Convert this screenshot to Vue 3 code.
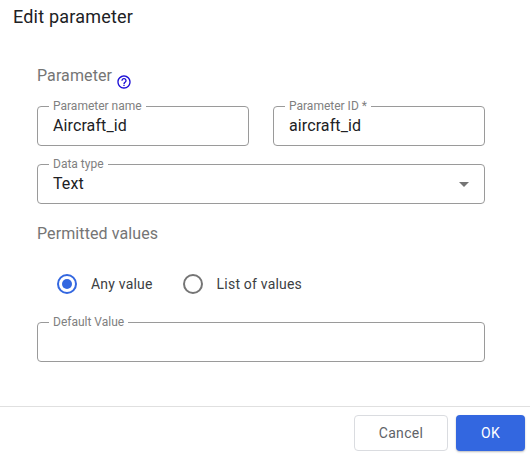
<template>
  <div class="dialog">
    <h1 class="title">Edit parameter</h1>

    <div class="body">
      <div class="section-head">
        <span class="section-title">Parameter</span>
        <svg class="help" viewBox="0 0 24 24" width="16" height="16">
          <path fill="#1a0dd6" d="M11 18h2v-2h-2v2zm1-16C6.48 2 2 6.48 2 12s4.48 10 10 10 10-4.48 10-10S17.52 2 12 2zm0 18c-4.41 0-8-3.59-8-8s3.59-8 8-8 8 3.59 8 8-3.59 8-8 8zm0-14c-2.21 0-4 1.79-4 4h2c0-1.1.9-2 2-2s2 .9 2 2c0 2-3 1.75-3 5h2c0-2.25 3-2.5 3-5 0-2.21-1.79-4-4-4z"/>
        </svg>
      </div>

      <div class="row">
        <div class="field">
          <label class="field-label">Parameter name</label>
          <div class="field-value">Aircraft_id</div>
        </div>
        <div class="field">
          <label class="field-label">Parameter ID *</label>
          <div class="field-value">aircraft_id</div>
        </div>
      </div>

      <div class="field select">
        <label class="field-label">Data type</label>
        <div class="field-value">Text</div>
        <span class="caret"></span>
      </div>

      <div class="section-title permitted">Permitted values</div>

      <div class="radios">
        <div v-for="opt in options" :key="opt" class="radio-item">
          <span class="radio" :class="{ checked: opt === selected }"></span>
          <span class="radio-label">{{ opt }}</span>
        </div>
      </div>

      <div class="field">
        <label class="field-label">Default Value</label>
        <div class="field-value"></div>
      </div>
    </div>

    <div class="footer">
      <button class="btn cancel">Cancel</button>
      <button class="btn ok">OK</button>
    </div>
  </div>
</template>

<script setup>
const options = ['Any value', 'List of values'];
const selected = 'Any value';
</script>

<style>
html, body {
  margin: 0;
  background: #fff;
}
</style>

<style scoped>
.dialog {
  width: 530px;
  height: 456px;
  display: flex;
  flex-direction: column;
  box-sizing: border-box;
  font-family: Roboto, "Liberation Sans", sans-serif;
  background: #fff;
}
.title {
  margin: 0;
  padding: 7px 13px 0;
  height: 29px;
  font-size: 18px;
  line-height: 20px;
  font-weight: 400;
  letter-spacing: 0.2px;
  color: #202124;
}
.body {
  flex: 1;
  padding: 30px 45px 0 37px;
}
.section-head {
  display: flex;
  align-items: flex-start;
  gap: 4px;
  height: 36px;
}
.section-title {
  font-size: 16px;
  line-height: 20px;
  letter-spacing: 0.1px;
  color: #757575;
}
.help {
  margin-top: 8px;
}
.row {
  display: grid;
  grid-template-columns: 212px 212px;
  gap: 24px;
  margin-top: 4px;
}
.field {
  position: relative;
  height: 40px;
  border: 1px solid #9a9a9a;
  border-radius: 4px;
  box-sizing: border-box;
}
.field-label {
  position: absolute;
  left: 11px;
  top: -8px;
  padding: 0 4px;
  font-size: 12px;
  line-height: 14px;
  color: #808080;
  background: #fff;
}
.field-value {
  padding: 9px 15px 0;
  font-size: 16px;
  line-height: 20px;
  letter-spacing: 0.1px;
  color: #202124;
}
.select {
  margin-top: 18px;
}
.caret {
  position: absolute;
  right: 15px;
  top: 17px;
  width: 0;
  height: 0;
  border-left: 5px solid transparent;
  border-right: 5px solid transparent;
  border-top: 5px solid #757575;
}
.permitted {
  display: block;
  margin-top: 20px;
}
.radios {
  display: flex;
  gap: 30px;
  margin-top: 30px;
  padding-left: 20px;
}
.radio-item {
  display: flex;
  align-items: center;
  gap: 14px;
}
.radio {
  width: 20px;
  height: 20px;
  border: 2px solid #757575;
  border-radius: 50%;
  box-sizing: border-box;
  display: flex;
  align-items: center;
  justify-content: center;
}
.radio.checked {
  border-color: #3367e0;
}
.radio.checked::after {
  content: "";
  width: 10px;
  height: 10px;
  border-radius: 50%;
  background: #3367e0;
}
.radio-label {
  font-size: 14px;
  line-height: 20px;
  color: #3c4043;
  letter-spacing: 0.2px;
}
.radios + .field {
  margin-top: 28px;
}
.footer {
  height: 50px;
  box-sizing: border-box;
  border-top: 1px solid #e0e0e0;
  display: flex;
  justify-content: flex-end;
  gap: 8px;
  padding: 8px 5px 0 0;
}
.btn {
  height: 36px;
  border-radius: 4px;
  font-family: inherit;
  font-size: 14px;
  font-weight: 400;
  letter-spacing: 0.3px;
  box-sizing: border-box;
}
.cancel {
  width: 94px;
  background: #fff;
  border: 1px solid #dadce0;
  color: #5f6368;
}
.ok {
  width: 69px;
  background: #3367e0;
  border: none;
  color: #fff;
  box-shadow: 0 1px 2px rgba(60, 64, 67, 0.35);
}
</style>
